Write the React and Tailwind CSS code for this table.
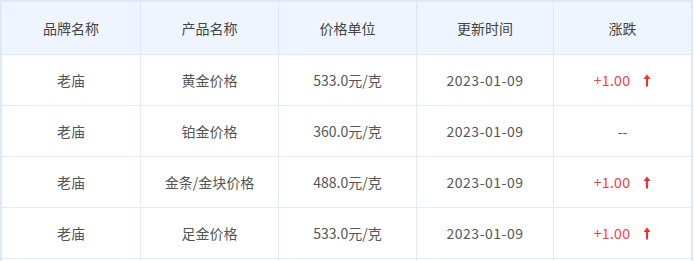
import React from "react";

const widths = ["w-[139px]", "w-[138px]", "w-[138px]", "w-[137px]", "w-[137px]"];

const header = ["品牌名称", "产品名称", "价格单位", "更新时间", "涨跌"];

const rows = [
  ["老庙", "黄金价格", "533.0元/克", "2023-01-09", "up"],
  ["老庙", "铂金价格", "360.0元/克", "2023-01-09", "--"],
  ["老庙", "金条/金块价格", "488.0元/克", "2023-01-09", "up"],
  ["老庙", "足金价格", "533.0元/克", "2023-01-09", "up"],
  ["", "", "", "", ""],
];

function Arrow() {
  return (
    <svg width="8" height="13" viewBox="0 0 8 13" className="ml-[13px] mt-[1px]">
      <path d="M4 0.5 L7.5 5 L5 5 L5 12.5 L3 12.5 L3 5 L0.5 5 Z" fill="#ff2a2a" />
    </svg>
  );
}

function Change({ v }) {
  if (v === "") return null;
  if (v === "--") return <span className="text-[#555]">--</span>;
  return (
    <span className="flex items-center text-[#ff3a3a]">
      <span className="tracking-[0.3px]">+1.00</span>
      <Arrow />
    </span>
  );
}

export default function App() {
  return (
    <div
      className="w-[695px] h-[261px] overflow-hidden bg-white text-[14px]"
      style={{ fontFamily: '"Noto Sans CJK SC", "Noto Sans", sans-serif' }}
    >
      <div className="w-[693px] border-t-2 border-l-2 border-r-2 border-[#dde9f9]">
        <div className="flex h-[53px] bg-[#eef5fe] border-b border-[#d9e7fa] text-[#444]">
          {header.map((h, i) => (
            <div
              key={i}
              className={`${widths[i]} flex items-center justify-center ${i < 4 ? "border-r border-[#d9e7fa]" : ""}`}
            >
              {h}
            </div>
          ))}
        </div>
        {rows.map((r, ri) => (
          <div key={ri} className="flex h-[51px] border-b border-[#dfeafa] text-[#555] bg-white">
            {r.map((c, i) => (
              <div
                key={i}
                className={`${widths[i]} flex items-center justify-center ${i < 4 ? "border-r border-[#dfeafa]" : ""} ${i === 3 ? "tracking-[0.5px]" : ""}`}
              >
                {i === 4 ? <Change v={c} /> : c}
              </div>
            ))}
          </div>
        ))}
      </div>
    </div>
  );
}
